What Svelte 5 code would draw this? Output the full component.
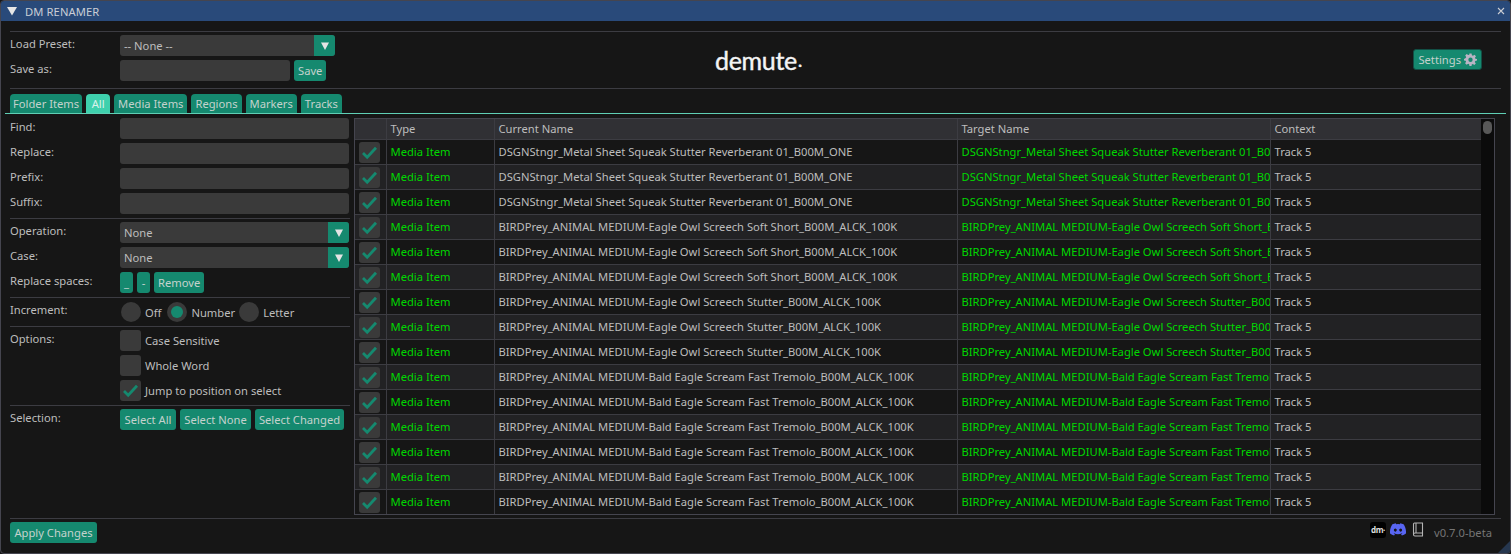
<script>
  const names = [
    ...Array(3).fill('DSGNStngr_Metal Sheet Squeak Stutter Reverberant 01_B00M_ONE'),
    ...Array(3).fill('BIRDPrey_ANIMAL MEDIUM-Eagle Owl Screech Soft Short_B00M_ALCK_100K'),
    ...Array(3).fill('BIRDPrey_ANIMAL MEDIUM-Eagle Owl Screech Stutter_B00M_ALCK_100K'),
    ...Array(6).fill('BIRDPrey_ANIMAL MEDIUM-Bald Eagle Scream Fast Tremolo_B00M_ALCK_100K')
  ];
  const tabs = ['Folder Items', 'All', 'Media Items', 'Regions', 'Markers', 'Tracks'];
</script>

{#snippet check()}
  <svg class="check" viewBox="0 0 21 21"><path d="M4 11l4.200 4.200 8.800-9.400" fill="none" stroke="#15896f" stroke-width="2.800" /></svg>
{/snippet}
{#snippet caret()}
  <span class="caret"><svg viewBox="0 0 10 10" width="10" height="10"><path d="M1 1.500h8L5 9z" fill="#e4e4e4" /></svg></span>
{/snippet}

<div class="win">
  <header class="title">
    <svg viewBox="0 0 10 10" width="10" height="10"><path d="M0 1h10L5 9.500z" fill="#e6e6e6" /></svg>
    <span class="title-text">DM RENAMER</span>
    <svg class="close" viewBox="0 0 8 8" width="8" height="8"><path d="M1 1l6 6M7 1l-6 6" stroke="#c9ccd2" stroke-width="1.100" /></svg>
  </header>

  <div class="body">
    <hr class="sep first" />
    <section class="top">
      <div class="preset">
        <div class="row"><span class="lab">Load Preset:</span><div class="combo wide"><span>-- None --</span>{@render caret()}</div></div>
        <div class="row"><span class="lab">Save as:</span><div class="input save-in"></div><button class="btn">Save</button></div>
      </div>
      <div class="logo">demute<span>·</span></div>
      <button class="btn settings">Settings
        <svg viewBox="0 0 24 24" width="13" height="13"><path fill="#b9b4c4" fill-rule="evenodd" d="M10 1h4l.6 3.200 2 .9L19.300 3.200l2.800 2.800-1.900 2.700.9 2L24 11v3l-3.200.6-.9 2 1.900 2.700-2.800 2.800-2.700-1.900-2 .9L14 24h-4l-.5-3.200-2-.9-2.700 1.900L2 19l1.900-2.700-.9-2L0 14v-3l3.200-1.600.9-2L2.200 4.800 5 2l2.700 1.900 2-.9zM12 8.500a4 4 0 1 0 0 8 4 4 0 0 0 0-8z" /></svg>
      </button>
    </section>
    <hr class="sep second" />

    <nav class="tabs">
      {#each tabs as t}
        <span class="tab" class:active={t === 'All'}>{t}</span>
      {/each}
    </nav>
  </div>
  <div class="tabline"></div>

  <main class="main">
    <aside class="side">
      <div class="row"><span class="lab">Find:</span><div class="input full"></div></div>
      <div class="row"><span class="lab">Replace:</span><div class="input full"></div></div>
      <div class="row"><span class="lab">Prefix:</span><div class="input full"></div></div>
      <div class="row"><span class="lab">Suffix:</span><div class="input full"></div></div>
      <hr class="sep" />
      <div class="row"><span class="lab">Operation:</span><div class="combo full"><span>None</span>{@render caret()}</div></div>
      <div class="row"><span class="lab">Case:</span><div class="combo full"><span>None</span>{@render caret()}</div></div>
      <div class="row"><span class="lab">Replace spaces:</span><button class="btn sq">_</button><button class="btn sq">-</button><button class="btn">Remove</button></div>
      <hr class="sep" />
      <div class="row radios">
        <span class="lab">Increment:</span>
        <span class="radio"></span><span class="rl">Off</span>
        <span class="radio on"></span><span class="rl">Number</span>
        <span class="radio"></span><span class="rl">Letter</span>
      </div>
      <hr class="sep" />
      <div class="row"><span class="lab">Options:</span><span class="box"></span><span class="cl">Case Sensitive</span></div>
      <div class="row"><span class="lab"></span><span class="box"></span><span class="cl">Whole Word</span></div>
      <div class="row"><span class="lab"></span><span class="box">{@render check()}</span><span class="cl">Jump to position on select</span></div>
      <hr class="sep" />
      <div class="row sel"><span class="lab">Selection:</span><button class="btn">Select All</button><button class="btn">Select None</button><button class="btn">Select Changed</button></div>
    </aside>

    <div class="tablewrap">
      <table>
        <colgroup><col class="c1" /><col class="c2" /><col class="c3" /><col class="c4" /><col /></colgroup>
        <thead><tr><th></th><th>Type</th><th>Current Name</th><th>Target Name</th><th>Context</th></tr></thead>
        <tbody>
          {#each names as n}
            <tr>
              <td class="ck"><span class="box">{@render check()}</span></td>
              <td class="green">Media Item</td>
              <td>{n}</td>
              <td class="green">{n}</td>
              <td>Track 5</td>
            </tr>
          {/each}
        </tbody>
      </table>
      <div class="scroll"><div class="thumb"></div></div>
    </div>
  </main>

  <footer class="foot">
    <hr class="sep" />
    <div class="foot-row">
      <button class="btn apply">Apply Changes</button>
      <div class="foot-right">
        <span class="dm">dm·</span>
        <svg viewBox="0 0 24 18.500" width="16" height="15"><path fill="#5865f2" d="M20.300 1.500A20 20 0 0 0 15.400 0l-.6 1.300a18 18 0 0 0-5.600 0L8.600 0a20 20 0 0 0-5 1.500C.5 6.200-.4 10.800.1 15.300A20 20 0 0 0 6.200 18.300l1.200-2-1.900-.9.500-.4a14 14 0 0 0 12 0l.5.4-1.900.9 1.200 2a20 20 0 0 0 6.100-3c.6-5.300-.9-9.800-3.600-13.800zM8 12.500c-1.200 0-2.200-1.100-2.200-2.400S6.800 7.700 8 7.700s2.200 1.100 2.200 2.400-1 2.400-2.200 2.400zm8 0c-1.200 0-2.200-1.100-2.200-2.400s1-2.400 2.200-2.400 2.200 1.100 2.200 2.400-1 2.400-2.200 2.400z" /></svg>
        <svg class="book" viewBox="0 0 12 15" width="12" height="15"><path fill="none" stroke="#b4b4b4" stroke-width="1.100" d="M1.500 12.500V2q0-1 1-1h8v10h-7.500q-1.500 0-1.500 1.500t1.500 1.500h7.500v-3M4 1v10" /></svg>
        <span class="ver">v0.7.0-beta</span>
      </div>
    </div>
  </footer>
  <div class="grip"></div>
</div>

<style>
  :global(body) { margin: 0; background: #161616; }
  .win {
    box-sizing: border-box; width: 1511px; height: 554px; position: relative; overflow: hidden;
    background: #161616; border: 1px solid #45454f; border-radius: 4px;
    font-family: "Noto Sans", "Open Sans", sans-serif; font-size: 11.2px; color: #bdbdbd;
    display: flex; flex-direction: column;
  }
  .title { flex: none; height: 20px; background: #294a7a; display: flex; align-items: center; padding: 0 5px 0 6px; }
  .title-text { margin-left: 8px; letter-spacing: .1px; color: #c9ced6; }
  .close { margin-left: auto; }
  hr.sep { border: 0; height: 1px; background: #3c3c42; margin: 0 0 -1px; flex: none; }
  .body { flex: none; padding: 0 9px; }
  hr.sep.first { margin: 10px 0 0; }
  .top { display: flex; align-items: flex-start; height: 53px; margin-top: 3px; }
  .preset { width: 400px; flex: none; display: flex; flex-direction: column; gap: 4px; }
  .row { display: flex; align-items: flex-start; height: 21px; flex: none; }
  .lab { width: 110px; flex: none; line-height: 17px; }
  .input, .combo { height: 21px; background: #3a3a3a; border-radius: 3px; box-sizing: border-box; }
  .full { width: 229px; }
  .wide { width: 215px; }
  .save-in { width: 170px; margin-right: 4px; }
  .combo { display: flex; justify-content: space-between; line-height: 22px; padding-left: 4px; overflow: hidden; }
  .caret { width: 21px; background: #15896f; display: flex; align-items: center; justify-content: center; }
  .btn {
    font: inherit; color: #c4d2cd; background: #15896f; border: 0; border-radius: 3px; height: 21px;
    padding: 0 4px; line-height: 21px; white-space: nowrap; display: inline-flex; align-items: center; justify-content: center; gap: 5px;
  }
  .apply { width: 87px; }
  .logo { flex: none; margin-left: 305px; margin-top: 12px; font-family: Lato, sans-serif; font-size: 25px; line-height: 26px; color: #f4f4f4; letter-spacing: -.3px; width: 120px; -webkit-text-stroke: .4px #f4f4f4; }
  .logo span { font-size: 16px; margin-left: 1px; }
  .settings { margin-left: auto; margin-top: 14px; margin-right: 19px; border: 1px solid #124f45; box-sizing: border-box; height: 21px; gap: 3px; }
  hr.sep.second { margin: 0; }
  .tabs { display: flex; gap: 4px; margin-top: 5px; height: 19px; }
  .tab { background: #15896f; color: #c4d2cd; border-radius: 4px 4px 0 0; padding: 0 4px; line-height: 20px; }
  .tab:first-child { padding: 0 3px; }
  .tab.active { background: #3fd0ad; color: #d9f2ec; padding: 0 5.500px; }
  .tabline { flex: none; height: 1px; background: #5fcfb5; margin: 0 4px; }

  .main { flex: none; display: flex; height: 399px; padding: 4px 9px 0; gap: 4px; box-sizing: border-box; }
  .side { width: 340px; flex: none; display: flex; flex-direction: column; gap: 4px; }
  .side .row { gap: 4px; }
  .side .lab { margin-right: -4px; }
  .side .row > .btn.sq { width: 13px; padding: 0; }
  .radios { height: 20px; margin-top: 1px; align-items: center !important; }
  .radios .lab { align-self: flex-start; margin-top: -1px; }
  .radio { width: 20px; height: 20px; border-radius: 50%; background: #3a3a3a; box-sizing: border-box; flex: none; position: relative; margin-left: 1px; }
  .radio.on { margin-left: 2px; }
  .radio.on + .rl { margin-right: -1px; }
  .radio.on::after { content: ""; position: absolute; inset: 4px; border-radius: 50%; background: #15896f; }
  .box { display: block; width: 21px; height: 21px; background: #3a3a3a; border-radius: 3px; flex: none; }
  .check { display: block; width: 21px; height: 21px; }
  .cl { line-height: 22px; }
  .sel .btn:nth-of-type(1) { width: 56px; }
  .sel .btn:nth-of-type(2) { width: 71px; }
  .sel .btn:nth-of-type(3) { width: 89px; }

  .tablewrap { position: relative; width: 1141px; height: 397px; box-sizing: border-box; border: 1px solid #45454f; flex: none; overflow: hidden; background: #111; }
  table { border-collapse: collapse; table-layout: fixed; width: 1126px; }
  .c1 { width: 31px; } .c2 { width: 108px; } .c3 { width: 463px; } .c4 { width: 313px; }
  th, td { overflow: hidden; white-space: nowrap; padding: 0 4px; text-align: left; font-weight: 400; box-sizing: border-box; border: 1px solid #3c3c42; border-top: 0; border-left: 0; }
  th { height: 20px; background: #303034; color: #bdbdbd; }
  td { height: 25px; }
  tbody tr:nth-child(odd) { background: #161616; }
  tbody tr:nth-child(even) { background: #222224; }
  td:last-child, th:last-child { border-right: 0; }
  .green { color: #00d800; }
  td.ck { padding: 1px 4px 0; }
  .scroll { position: absolute; right: 0; top: 0; bottom: 0; width: 13px; background: #0b0b0b; }
  .thumb { position: absolute; top: 2px; left: 2px; width: 9px; height: 13px; border-radius: 5px; background: #585858; }

  .foot { flex: none; padding: 0 9px; margin-top: 5px; }
  .foot-row { display: flex; justify-content: space-between; align-items: center; margin-top: 4px; }
  .foot-right { display: flex; align-items: flex-start; gap: 4px; margin-right: 9px; height: 21px; }
  .dm { background: #000; color: #ddd; border-radius: 3px; width: 16px; height: 16px; font-size: 8px; font-weight: 700; line-height: 15px; text-align: center; display: block; letter-spacing: -.4px; }
  .book { margin-left: 2px; }
  .ver { color: #757575; margin-left: 6px; line-height: 21px; }
  .grip { position: absolute; right: 0; bottom: 0; width: 0; height: 0; border-left: 12px solid transparent; border-bottom: 12px solid #26374f; }
</style>
